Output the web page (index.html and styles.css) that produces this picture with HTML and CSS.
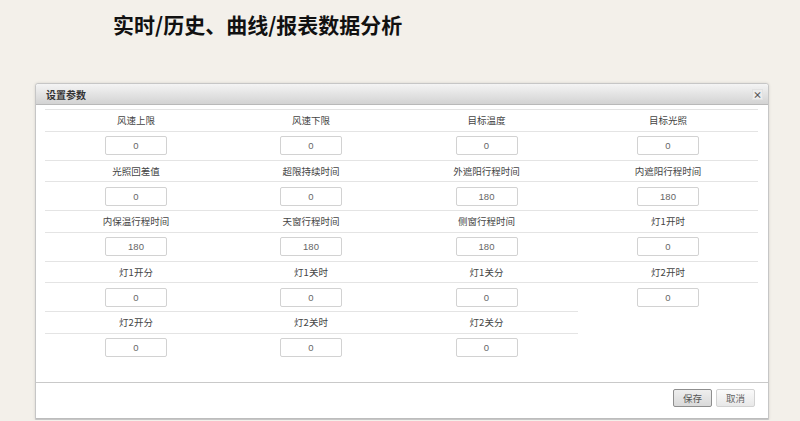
FILE: index.html
```html
<!DOCTYPE html>
<html lang="zh-CN">
<head>
  <meta charset="UTF-8">
  <meta name="viewport" content="width=device-width, initial-scale=1.0">
  <title>实时/历史、曲线/报表数据分析</title>
  <link rel="stylesheet" href="styles.css">
</head>
<body>
  <h1 class="page-title">实时/历史、曲线/报表数据分析</h1>

  <div class="dialog">
    <div class="dialog-header">
      <span class="dialog-title">设置参数</span>
      <span class="dialog-close">×</span>
    </div>
    <div class="dialog-body">
      <div class="param-grid">
        <div class="param"><div class="param-label">风速上限</div><div class="param-field"><input class="param-input" value="0"></div></div>
        <div class="param"><div class="param-label">风速下限</div><div class="param-field"><input class="param-input" value="0"></div></div>
        <div class="param"><div class="param-label">目标温度</div><div class="param-field"><input class="param-input" value="0"></div></div>
        <div class="param"><div class="param-label">目标光照</div><div class="param-field"><input class="param-input" value="0"></div></div>

        <div class="param"><div class="param-label">光照回差值</div><div class="param-field"><input class="param-input" value="0"></div></div>
        <div class="param"><div class="param-label">超限持续时间</div><div class="param-field"><input class="param-input" value="0"></div></div>
        <div class="param"><div class="param-label">外遮阳行程时间</div><div class="param-field"><input class="param-input" value="180"></div></div>
        <div class="param"><div class="param-label">内遮阳行程时间</div><div class="param-field"><input class="param-input" value="180"></div></div>

        <div class="param"><div class="param-label">内保温行程时间</div><div class="param-field"><input class="param-input" value="180"></div></div>
        <div class="param"><div class="param-label">天窗行程时间</div><div class="param-field"><input class="param-input" value="180"></div></div>
        <div class="param"><div class="param-label">侧窗行程时间</div><div class="param-field"><input class="param-input" value="180"></div></div>
        <div class="param"><div class="param-label">灯1开时</div><div class="param-field"><input class="param-input" value="0"></div></div>

        <div class="param"><div class="param-label">灯1开分</div><div class="param-field"><input class="param-input" value="0"></div></div>
        <div class="param"><div class="param-label">灯1关时</div><div class="param-field"><input class="param-input" value="0"></div></div>
        <div class="param"><div class="param-label">灯1关分</div><div class="param-field"><input class="param-input" value="0"></div></div>
        <div class="param"><div class="param-label">灯2开时</div><div class="param-field"><input class="param-input" value="0"></div></div>

        <div class="param"><div class="param-label">灯2开分</div><div class="param-field"><input class="param-input" value="0"></div></div>
        <div class="param"><div class="param-label">灯2关时</div><div class="param-field"><input class="param-input" value="0"></div></div>
        <div class="param"><div class="param-label">灯2关分</div><div class="param-field"><input class="param-input" value="0"></div></div>
      </div>
    </div>
    <div class="dialog-footer">
      <button class="btn btn-save">保存</button>
      <button class="btn">取消</button>
    </div>
  </div>
</body>
</html>
```

FILE: styles.css
```css
body { margin: 0; background: #f3f0ea; font-family: "Noto Sans CJK SC", "Noto Sans", sans-serif; color: #444; }
.page-title { margin: 0; padding: 11px 0 0 113px; font-size: 21px; line-height: 26px; font-weight: bold; color: #111; }

.dialog { width: 732px; margin: 46px 0 0 35px; background: #fff; border: 1px solid #c6c6c6; border-radius: 3px 3px 0 0; box-shadow: 0 0 3px rgba(0, 0, 0, 0.12); }
.dialog-header { height: 20px; display: flex; align-items: center; justify-content: space-between; padding: 0 5px 0 10px; background: linear-gradient(#f4f4f4, #d3d3d3); border-bottom: 1px solid #b9b9b9; border-radius: 3px 3px 0 0; }
.dialog-title { font-size: 10px; font-weight: bold; color: #333; }
.dialog-close { width: 9px; height: 9px; display: flex; align-items: center; justify-content: center; background: #ececec; border: 1px solid #e2e2e2; color: #555; font-size: 9px; font-weight: bold; line-height: 9px; }

.dialog-body { padding: 4px 10px 20px 9px; }
.param-grid { display: grid; grid-template-columns: 182px 168px 183px 1fr; }
.param-label { height: 20.5px; line-height: 20.5px; border-top: 1px solid #e4e4e4; text-align: center; font-size: 9.5px; color: #444; }
.param-field { height: 28px; display: flex; align-items: center; justify-content: center; border-top: 1px solid #e4e4e4; }
.param-input { box-sizing: border-box; width: 62px; height: 19px; padding: 0; border: 1px solid #d2d2d2; border-radius: 2px; text-align: center; font-family: "Liberation Sans", Arial, sans-serif; font-size: 9.5px; color: #666; background: #fff; }

.dialog-footer { height: 37px; display: flex; justify-content: flex-end; align-items: flex-start; gap: 4px; padding: 6px 13px 0 0; box-sizing: border-box; border-top: 1px solid #c9c9c9; border-bottom: 1px solid #bdbdbd; }
.btn { width: 39px; height: 18px; padding: 0; border: 1px solid #d2d2d2; border-radius: 2px; background: linear-gradient(#fafafa, #e8e8e8); font-family: "Noto Sans CJK SC", sans-serif; font-size: 9.5px; color: #666; cursor: pointer; }
.btn-save { border: 1px solid #8e8e8e; background: linear-gradient(#eeeeee, #d9d9d9); color: #555; }
```
